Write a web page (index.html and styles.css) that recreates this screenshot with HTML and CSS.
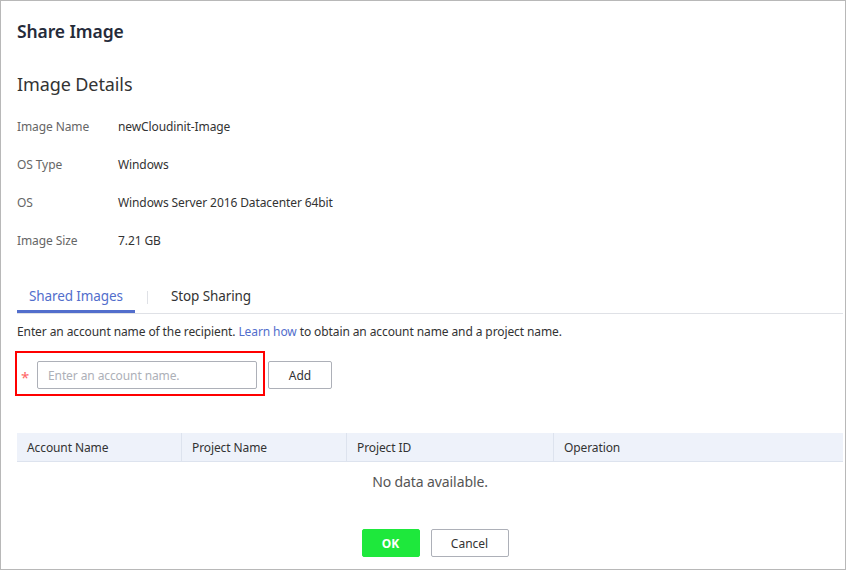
FILE: index.html
```html
<!DOCTYPE html>
<html lang="en">
<head>
  <meta charset="UTF-8">
  <meta name="viewport" content="width=device-width, initial-scale=1.0">
  <title>Share Image</title>
  <link rel="stylesheet" href="styles.css">
</head>
<body>
  <div class="dialog">
    <h1 class="dialog-title">Share Image</h1>

    <h2 class="section-title">Image Details</h2>
    <div class="details">
      <div class="detail-row"><span class="detail-label">Image Name</span><span class="detail-value">newCloudinit-Image</span></div>
      <div class="detail-row"><span class="detail-label">OS Type</span><span class="detail-value">Windows</span></div>
      <div class="detail-row"><span class="detail-label">OS</span><span class="detail-value">Windows Server 2016 Datacenter 64bit</span></div>
      <div class="detail-row"><span class="detail-label">Image Size</span><span class="detail-value">7.21 GB</span></div>
    </div>

    <div class="tabs">
      <div class="tab active">Shared Images</div>
      <div class="tab-divider"></div>
      <div class="tab">Stop Sharing</div>
    </div>

    <p class="hint">Enter an account name of the recipient. <a href="#" class="link">Learn how</a> to obtain an account name and a project name.</p>

    <div class="add-row">
      <div class="highlight">
        <span class="required">*</span>
        <input type="text" class="text-input" placeholder="Enter an account name.">
      </div>
      <button class="btn">Add</button>
    </div>

    <table class="share-table">
      <thead>
        <tr>
          <th class="col-account">Account Name</th>
          <th class="col-project">Project Name</th>
          <th class="col-id">Project ID</th>
          <th>Operation</th>
        </tr>
      </thead>
      <tbody>
        <tr><td colspan="4" class="empty">No data available.</td></tr>
      </tbody>
    </table>

    <div class="footer">
      <button class="btn btn-ok">OK</button>
      <button class="btn btn-cancel">Cancel</button>
    </div>
  </div>
</body>
</html>
```

FILE: styles.css
```css
body {
  margin: 0;
  font-family: 'Noto Sans', 'Open Sans', sans-serif;
  letter-spacing: -0.1px;
  background-color: #fff;
  color: #333;
}

.dialog {
  box-sizing: border-box;
  width: 846px;
  height: 570px;
  border: 1px solid #b8b8b8;
  padding: 18px 2px 0 16px;
}

.dialog-title {
  margin: 0;
  font-size: 17.5px;
  line-height: 24px;
  font-weight: 600;
  color: #252b3a;
}

.section-title {
  margin: 29px 0 0;
  font-size: 18px;
  line-height: 24px;
  font-weight: normal;
  color: #333;
}

.details {
  margin-top: 11px;
}

.detail-row {
  display: flex;
  align-items: center;
  height: 38px;
  font-size: 12px;
}

.detail-label {
  width: 101px;
  color: #666;
}

.detail-value {
  color: #333;
}

.tabs {
  display: flex;
  align-items: center;
  margin-top: 22px;
  border-bottom: 1px solid #dfe1e6;
}

.tab {
  height: 32px;
  line-height: 30px;
  padding: 0 12px;
  font-size: 13.5px;
  color: #333;
  box-sizing: border-box;
}

.tab.active {
  color: #526ecc;
  border-bottom: 3px solid #526ecc;
  line-height: 28px;
  padding-top: 1px;
}

.tab-divider {
  width: 1px;
  height: 13px;
  background-color: #dfe1e6;
  margin: 0 11px 0 12px;
}

.hint {
  margin: 10px 0 0;
  font-size: 12px;
  line-height: 16px;
  color: #333;
}

.link {
  color: #526ecc;
  text-decoration: none;
}

.add-row {
  display: flex;
  align-items: center;
  margin: 11px 0 0 -2px;
  gap: 3px;
}

.highlight {
  display: flex;
  align-items: center;
  width: 242px;
  padding: 8px 0 5px 4px;
  border: 2px solid #f00;
}

.required {
  color: #f66;
  font-size: 15px;
  width: 16px;
  padding-top: 4px;
}

.text-input {
  box-sizing: border-box;
  width: 220px;
  height: 28px;
  border: 1px solid #adb0b8;
  border-radius: 2px;
  padding: 0 10px;
  font-family: inherit;
  font-size: 12px;
  letter-spacing: -0.1px;
  color: #333;
}

.text-input::placeholder {
  color: #adb0b8;
}

.btn {
  box-sizing: border-box;
  height: 28px;
  border: 1px solid #adb0b8;
  border-radius: 2px;
  background-color: #fff;
  font-family: inherit;
  font-size: 12px;
  color: #333;
  cursor: pointer;
}

.add-row .btn {
  width: 64px;
  margin-top: 3px;
}

.share-table {
  width: 826px;
  margin-top: 37px;
  border-collapse: collapse;
  font-size: 12px;
}

.share-table th {
  height: 28px;
  padding: 0 10px;
  text-align: left;
  font-weight: normal;
  color: #333;
  background-color: #eef2fa;
  border-left: 1px solid #dde3ee;
  border-bottom: 1px solid #dde3ee;
}

.share-table th:first-child {
  border-left: none;
}

.col-account {
  width: 144px;
}

.col-project {
  width: 144px;
}

.col-id {
  width: 186px;
}

.empty {
  height: 36px;
  text-align: center;
  font-size: 14px;
  color: #555;
}

.footer {
  display: flex;
  justify-content: center;
  gap: 11px;
  margin-top: 29px;
  padding-left: 10px;
}

.btn-ok {
  width: 58px;
  border-color: #1ee83c;
  background-color: #1ee83c;
  color: #fff;
  font-weight: bold;
}

.btn-cancel {
  width: 78px;
}
```
